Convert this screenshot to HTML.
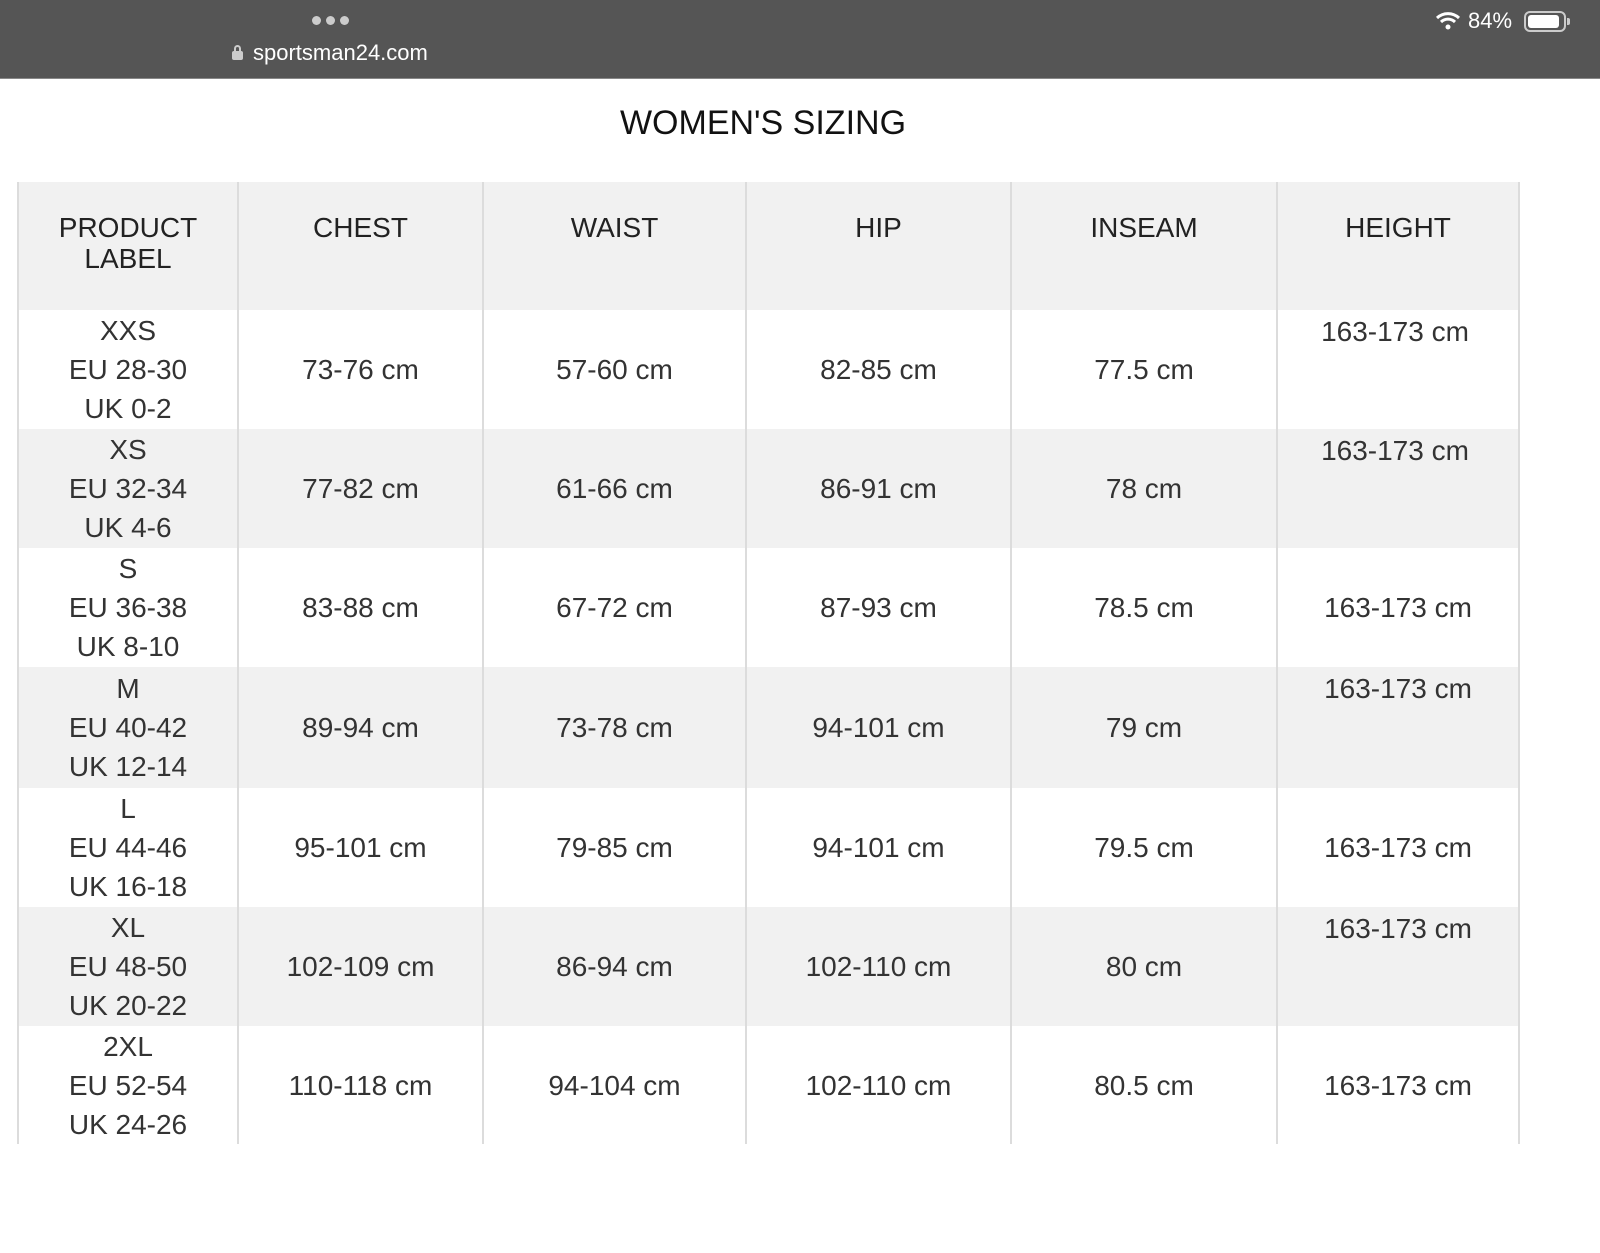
<!DOCTYPE html>
<html><head><meta charset="utf-8"><style>
*{margin:0;padding:0;box-sizing:border-box}
body{width:1600px;height:1253px;background:#fff;position:relative;overflow:hidden;font-family:"Liberation Sans",Arial,sans-serif;color:#333}
.bar{position:absolute;left:0;top:0;width:1600px;height:79px;background:#555;border-bottom:1px solid #888}
.abs{position:absolute}
.cell{position:absolute;display:flex;flex-direction:column;align-items:center;justify-content:center;text-align:center;font-size:28px;line-height:39px;color:#333}
.top{justify-content:flex-start;padding-top:2px}
.hdr{font-size:28px;line-height:31px;justify-content:flex-start;padding-top:30px;color:#222}
.vl{position:absolute;width:2px;background:#dcdcdc}
</style></head><body>
<div class="bar">
  <div class="abs" style="left:312px;top:16px;display:flex;gap:5px"><span style="width:9px;height:9px;border-radius:50%;background:#ccc"></span><span style="width:9px;height:9px;border-radius:50%;background:#ccc"></span><span style="width:9px;height:9px;border-radius:50%;background:#ccc"></span></div>
  <div class="abs" style="left:232px;top:45px;width:11px;height:14px"><div style="position:absolute;left:2px;top:0;width:7px;height:8px;border:2px solid #ccc;border-radius:4px 4px 0 0"></div><div style="position:absolute;left:0;top:6px;width:11px;height:9px;background:#ccc;border-radius:2px"></div></div>
  <div class="abs" style="left:253px;top:40px;font-size:22px;color:#fff">sportsman24.com</div>
  <svg class="abs" style="left:1435px;top:11px" width="26" height="20" viewBox="0 0 26 20"><path d="M2 7 A16 16 0 0 1 24 7" stroke="#fff" stroke-width="3" fill="none"/><path d="M6 11 A10 10 0 0 1 20 11" stroke="#fff" stroke-width="3" fill="none"/><circle cx="13" cy="16" r="2.5" fill="#fff"/></svg>
  <div class="abs" style="left:1468px;top:8px;font-size:22px;color:#fff">84%</div>
  <div class="abs" style="left:1524px;top:11px;width:42px;height:21px;border:2px solid #ccc;border-radius:6px"><div style="position:absolute;left:2px;top:2px;width:31px;height:13px;background:#fff;border-radius:3px"></div></div>
  <div class="abs" style="left:1567px;top:18px;width:3px;height:7px;background:#ccc;border-radius:0 2px 2px 0"></div>
</div>
<div class="abs" style="left:0;width:1526px;top:104px;text-align:center;font-size:34px;color:#111">WOMEN'S SIZING</div>

<div class="abs" style="left:18px;top:182px;width:1501px;height:128px;background:#f1f1f1"></div>
<div class="abs" style="left:18px;top:429px;width:1501px;height:119px;background:#f1f1f1"></div>
<div class="abs" style="left:18px;top:667px;width:1501px;height:121px;background:#f1f1f1"></div>
<div class="abs" style="left:18px;top:907px;width:1501px;height:119px;background:#f1f1f1"></div>

<div class="vl" style="left:17px;top:182px;height:962px"></div>
<div class="vl" style="left:237px;top:182px;height:962px"></div>
<div class="vl" style="left:482px;top:182px;height:962px"></div>
<div class="vl" style="left:745px;top:182px;height:962px"></div>
<div class="vl" style="left:1010px;top:182px;height:962px"></div>
<div class="vl" style="left:1276px;top:182px;height:962px"></div>
<div class="vl" style="left:1518px;top:182px;height:962px"></div>

<div class="cell hdr" style="left:18px;top:182px;width:220px;height:128px">PRODUCT<br>LABEL</div>
<div class="cell hdr" style="left:238px;top:182px;width:245px;height:128px">CHEST</div>
<div class="cell hdr" style="left:483px;top:182px;width:263px;height:128px">WAIST</div>
<div class="cell hdr" style="left:746px;top:182px;width:265px;height:128px">HIP</div>
<div class="cell hdr" style="left:1011px;top:182px;width:266px;height:128px">INSEAM</div>
<div class="cell hdr" style="left:1277px;top:182px;width:242px;height:128px">HEIGHT</div>

<div class="cell" style="left:18px;top:310px;width:220px;height:119px">XXS<br>EU 28-30<br>UK 0-2</div>
<div class="cell" style="left:238px;top:310px;width:245px;height:119px">73-76 cm</div>
<div class="cell" style="left:483px;top:310px;width:263px;height:119px">57-60 cm</div>
<div class="cell" style="left:746px;top:310px;width:265px;height:119px">82-85 cm</div>
<div class="cell" style="left:1011px;top:310px;width:266px;height:119px">77.5 cm</div>
<div class="cell top" style="left:1277px;top:310px;width:236px;height:119px">163-173 cm</div>

<div class="cell" style="left:18px;top:429px;width:220px;height:119px">XS<br>EU 32-34<br>UK 4-6</div>
<div class="cell" style="left:238px;top:429px;width:245px;height:119px">77-82 cm</div>
<div class="cell" style="left:483px;top:429px;width:263px;height:119px">61-66 cm</div>
<div class="cell" style="left:746px;top:429px;width:265px;height:119px">86-91 cm</div>
<div class="cell" style="left:1011px;top:429px;width:266px;height:119px">78 cm</div>
<div class="cell top" style="left:1277px;top:429px;width:236px;height:119px">163-173 cm</div>

<div class="cell" style="left:18px;top:548px;width:220px;height:119px">S<br>EU 36-38<br>UK 8-10</div>
<div class="cell" style="left:238px;top:548px;width:245px;height:119px">83-88 cm</div>
<div class="cell" style="left:483px;top:548px;width:263px;height:119px">67-72 cm</div>
<div class="cell" style="left:746px;top:548px;width:265px;height:119px">87-93 cm</div>
<div class="cell" style="left:1011px;top:548px;width:266px;height:119px">78.5 cm</div>
<div class="cell" style="left:1277px;top:548px;width:242px;height:119px">163-173 cm</div>

<div class="cell" style="left:18px;top:667px;width:220px;height:121px">M<br>EU 40-42<br>UK 12-14</div>
<div class="cell" style="left:238px;top:667px;width:245px;height:121px">89-94 cm</div>
<div class="cell" style="left:483px;top:667px;width:263px;height:121px">73-78 cm</div>
<div class="cell" style="left:746px;top:667px;width:265px;height:121px">94-101 cm</div>
<div class="cell" style="left:1011px;top:667px;width:266px;height:121px">79 cm</div>
<div class="cell top" style="left:1277px;top:667px;width:242px;height:121px">163-173 cm</div>

<div class="cell" style="left:18px;top:788px;width:220px;height:119px">L<br>EU 44-46<br>UK 16-18</div>
<div class="cell" style="left:238px;top:788px;width:245px;height:119px">95-101 cm</div>
<div class="cell" style="left:483px;top:788px;width:263px;height:119px">79-85 cm</div>
<div class="cell" style="left:746px;top:788px;width:265px;height:119px">94-101 cm</div>
<div class="cell" style="left:1011px;top:788px;width:266px;height:119px">79.5 cm</div>
<div class="cell" style="left:1277px;top:788px;width:242px;height:119px">163-173 cm</div>

<div class="cell" style="left:18px;top:907px;width:220px;height:119px">XL<br>EU 48-50<br>UK 20-22</div>
<div class="cell" style="left:238px;top:907px;width:245px;height:119px">102-109 cm</div>
<div class="cell" style="left:483px;top:907px;width:263px;height:119px">86-94 cm</div>
<div class="cell" style="left:746px;top:907px;width:265px;height:119px">102-110 cm</div>
<div class="cell" style="left:1011px;top:907px;width:266px;height:119px">80 cm</div>
<div class="cell top" style="left:1277px;top:907px;width:242px;height:119px">163-173 cm</div>

<div class="cell" style="left:18px;top:1026px;width:220px;height:118px">2XL<br>EU 52-54<br>UK 24-26</div>
<div class="cell" style="left:238px;top:1026px;width:245px;height:118px">110-118 cm</div>
<div class="cell" style="left:483px;top:1026px;width:263px;height:118px">94-104 cm</div>
<div class="cell" style="left:746px;top:1026px;width:265px;height:118px">102-110 cm</div>
<div class="cell" style="left:1011px;top:1026px;width:266px;height:118px">80.5 cm</div>
<div class="cell" style="left:1277px;top:1026px;width:242px;height:118px">163-173 cm</div>
</body></html>
